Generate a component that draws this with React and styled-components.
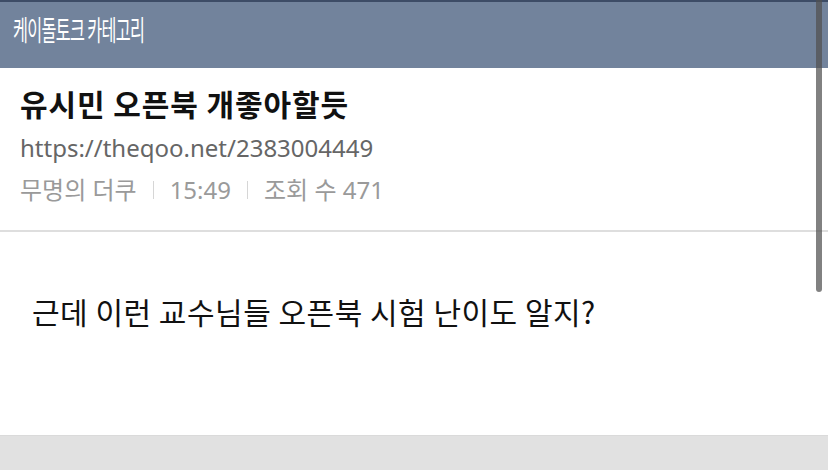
import React from 'react';
import styled, {createGlobalStyle} from 'styled-components';

const GlobalStyle = createGlobalStyle`
  html, body {
    margin: 0;
    padding: 0;
    background: #ffffff;
  }
  body {
    font-family: "Noto Sans", "Noto Sans CJK KR", sans-serif;
  }
`;

const Page = styled.div`
  position: relative;
  width: 828px;
  height: 470px;
  display: flex;
  flex-direction: column;
  overflow: hidden;
  background: #fff;
`;

const TopBar = styled.header`
  height: 66px;
  border-top: 2px solid #3d4c66;
  background: #72839c;
  display: flex;
  align-items: center;
  padding-left: 13px;
  flex-shrink: 0;
`;

const TopTitle = styled.span`
  display: inline-block;
  color: #fff;
  font-family: "Noto Sans CJK KR", sans-serif;
  font-size: 28px;
  font-weight: 400;
  letter-spacing: -1.2px;
  transform: scaleX(0.58);
  transform-origin: left center;
  white-space: nowrap;
  margin-top: -13px;
`;

const PostHead = styled.section`
  padding: 16px 20px 0;
  height: 146px;
  border-bottom: 2px solid #dedede;
  flex-shrink: 0;
`;

const Title = styled.h1`
  margin: 0;
  font-family: "Noto Sans CJK KR", sans-serif;
  font-size: 30px;
  font-weight: 700;
  color: #111;
  line-height: 38px;
  letter-spacing: 0.9px;
`;

const Url = styled.div`
  margin-top: 10px;
  font-size: 24px;
  line-height: 32px;
  color: #666;
`;

const Meta = styled.div`
  margin-top: 10px;
  display: flex;
  align-items: center;
  font-size: 24px;
  line-height: 32px;
  color: #9a9a9a;
`;

const Sep = styled.span`
  width: 1px;
  height: 18px;
  background: #d6d6d6;
  margin: 0 ${p => p.$gap}px;
`;

const Body = styled.main`
  flex: 1;
  padding: 59px 32px 0;
`;

const Paragraph = styled.p`
  margin: 0;
  font-family: "Noto Sans CJK KR", sans-serif;
  font-size: 30px;
  line-height: 40px;
  color: #111;
  letter-spacing: 0.5px;
`;

const Footer = styled.footer`
  height: 34px;
  background: #e1e1e1;
  border-top: 1px solid #dadada;
  flex-shrink: 0;
`;

const ScrollThumb = styled.div`
  position: absolute;
  top: 0;
  right: 6px;
  width: 6px;
  height: 292px;
  background: rgba(80, 80, 80, 0.72);
  border-radius: 0 0 3px 3px;
`;

const App = () => {
    return (
        <Page>
            <GlobalStyle/>
            <TopBar>
                <TopTitle>케이돌토크 카테고리</TopTitle>
            </TopBar>
            <PostHead>
                <Title>유시민 오픈북 개좋아할듯</Title>
                <Url>https://theqoo.net/2383004449</Url>
                <Meta>
                    <span>무명의 더쿠</span>
                    <Sep $gap={16}/>
                    <span>15:49</span>
                    <Sep $gap={16}/>
                    <span>조회 수 471</span>
                </Meta>
            </PostHead>
            <Body>
                <Paragraph>근데 이런 교수님들 오픈북 시험 난이도 알지?</Paragraph>
            </Body>
            <Footer/>
            <ScrollThumb/>
        </Page>
    );
};

export default App;
